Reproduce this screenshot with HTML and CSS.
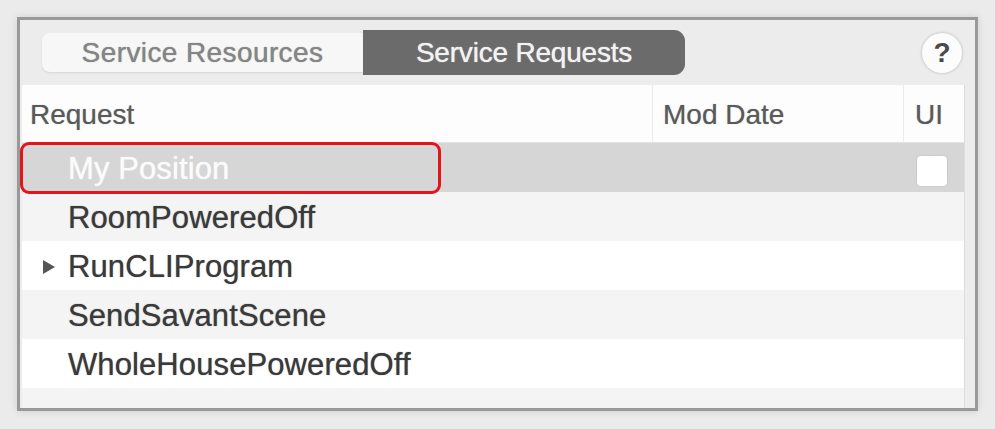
FILE: index.html
```html
<!DOCTYPE html>
<html>
<head>
<meta charset="utf-8">
<link rel="stylesheet" href="styles.css">
</head>
<body>
<div class="frame">
  <div class="toolbar">
    <div class="segmented">
      <div class="seg seg-off">Service Resources</div>
      <div class="seg seg-on">Service Requests</div>
    </div>
    <div class="help">?</div>
  </div>
  <div class="table">
    <div class="row header">
      <div class="cell c-req">Request</div>
      <div class="cell c-date">Mod Date</div>
      <div class="cell c-ui">UI</div>
    </div>
    <div class="row selected">
      <div class="cell c-name">My Position</div>
      <div class="cell"></div>
      <div class="cell c-check"><span class="checkbox"></span></div>
    </div>
    <div class="row alt">
      <div class="cell c-name">RoomPoweredOff</div>
      <div class="cell"></div>
      <div class="cell"></div>
    </div>
    <div class="row">
      <div class="cell c-name c-tree"><svg class="tri" width="14" height="16" viewBox="0 0 14 16"><polygon points="1,1 13,8 1,15" fill="#555"/></svg>RunCLIProgram</div>
      <div class="cell"></div>
      <div class="cell"></div>
    </div>
    <div class="row alt">
      <div class="cell c-name">SendSavantScene</div>
      <div class="cell"></div>
      <div class="cell"></div>
    </div>
    <div class="row">
      <div class="cell c-name">WholeHousePoweredOff</div>
      <div class="cell"></div>
      <div class="cell"></div>
    </div>
    <div class="row alt">
      <div class="cell c-name"></div>
      <div class="cell"></div>
      <div class="cell"></div>
    </div>
  </div>
  <div class="highlight"></div>
</div>
</body>
</html>
```

FILE: styles.css
```css
html, body {
  margin: 0;
  padding: 0;
}
body {
  background: #ebebeb;
  font-family: "Liberation Sans", Arial, sans-serif;
  width: 995px;
  height: 429px;
  overflow: hidden;
}
.frame {
  position: relative;
  box-sizing: border-box;
  margin: 17px 0 0 17px;
  width: 961px;
  height: 394px;
  border: 3px solid #999999;
  background: #ececec;
  box-shadow: 0 0 8px rgba(0, 0, 0, 0.12);
  overflow: hidden;
}
.toolbar {
  height: 65px;
  display: flex;
  align-items: center;
  padding-left: 22px;
}
.segmented {
  display: flex;
  align-items: center;
}
.seg {
  font-size: 28px;
  display: flex;
  align-items: center;
  justify-content: center;
  box-sizing: border-box;
  text-shadow: 0 0 1px currentColor;
}
.seg-off {
  width: 321px;
  height: 39px;
  background: #f7f7f7;
  color: #858585;
  border-radius: 8px 0 0 8px;
  box-shadow: 0 1px 2px rgba(0, 0, 0, 0.1);
  letter-spacing: 0.4px;
}
.seg-on {
  width: 322px;
  height: 45px;
  background: #6b6b6b;
  color: #f2f2f2;
  border-radius: 0 11px 11px 0;
  letter-spacing: -0.2px;
}
.help {
  margin-left: auto;
  margin-right: 13px;
  width: 40px;
  height: 40px;
  border-radius: 50%;
  background: #fcfcfc;
  box-shadow: 0 0 3px rgba(0, 0, 0, 0.25);
  color: #4a4a4a;
  font-size: 28px;
  font-weight: bold;
  display: flex;
  align-items: center;
  justify-content: center;
}
.table {
  margin-left: 2px;
  width: 943px;
  height: 323px;
  background: #fff;
  border-right: 1px solid #dcdcdc;
  box-sizing: border-box;
  overflow: hidden;
}
.row {
  display: grid;
  grid-template-columns: 630px 251px 62px;
  height: 49px;
}
.row.header {
  height: 58px;
  background: #fdfdfd;
  border-bottom: 1px solid #e4e4e4;
  box-sizing: border-box;
}
.cell {
  display: flex;
  align-items: center;
  box-sizing: border-box;
  color: #3a3a3a;
}
.header .cell {
  font-size: 28px;
  color: #5a5a5a;
  padding-top: 2px;
  text-shadow: 0 0 1px rgba(90, 90, 90, 0.6);
}
.c-req {
  padding-left: 8px;
}
.c-date {
  padding-left: 10px;
  border-left: 1px solid #ececec;
}
.c-ui {
  padding-left: 11px;
  border-left: 1px solid #ececec;
}
.c-name {
  font-size: 31px;
  padding-left: 46px;
  letter-spacing: 0.1px;
  padding-top: 2px;
  text-shadow: 0 0 1px rgba(50, 50, 50, 0.7);
}
.c-tree {
  padding-left: 20px;
}
.tri {
  margin-right: 12px;
}
.selected {
  background: #d6d6d6;
}
.selected .c-name {
  color: #fbfbfb;
  text-shadow: 0 0 1px rgba(255, 255, 255, 0.8);
}
.alt {
  background: #f4f4f4;
}
.c-check {
  padding-left: 14px;
  padding-top: 6px;
}
.checkbox {
  display: block;
  width: 30px;
  height: 30px;
  background: #fff;
  border-radius: 4px;
  box-shadow: 0 0 2px rgba(0, 0, 0, 0.15);
}
.highlight {
  position: absolute;
  left: 0;
  top: 122px;
  width: 421px;
  height: 52px;
  box-sizing: border-box;
  border: 3px solid #e5141b;
  border-radius: 9px;
}
```
